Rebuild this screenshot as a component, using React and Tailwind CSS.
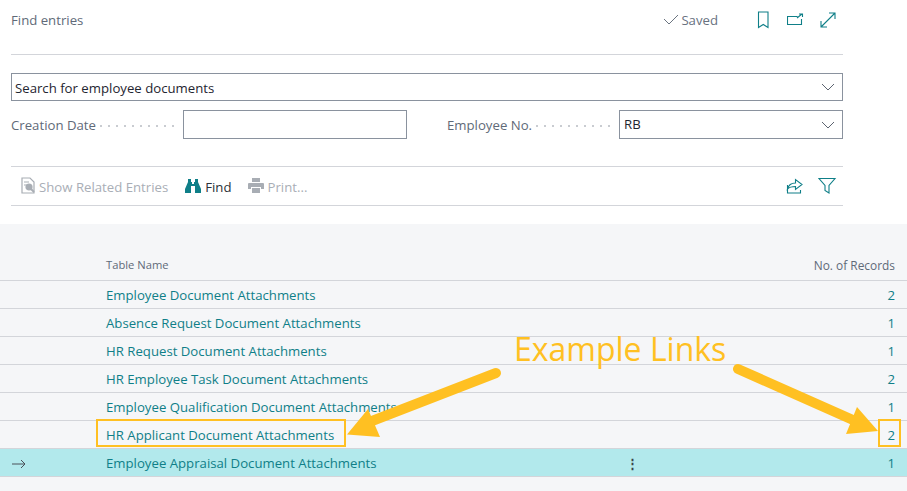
const ROWS = [
  { name: 'Employee Document Attachments', count: 2 },
  { name: 'Absence Request Document Attachments', count: 1 },
  { name: 'HR Request Document Attachments', count: 1 },
  { name: 'HR Employee Task Document Attachments', count: 2 },
  { name: 'Employee Qualification Document Attachments', count: 1 },
  { name: 'HR Applicant Document Attachments', count: 2, marked: true },
  { name: 'Employee Appraisal Document Attachments', count: 1, current: true },
]

function Chevron() {
  return (
    <svg width="14" height="8" viewBox="0 0 14 8" fill="none" stroke="#5c6470" strokeWidth="1">
      <path d="M1 1l6 6 6-6" />
    </svg>
  )
}

function TealIcon({ children, className = '' }) {
  return (
    <svg width="20" height="20" viewBox="0 0 20 20" fill="none" stroke="#0f7f88" strokeWidth="1.1" className={className}>
      {children}
    </svg>
  )
}

function Dots() {
  return <span className="flex-1 ml-[1px] mr-[9px] mt-[3px] h-[2px] bg-[radial-gradient(circle,#c9ccd1_0.8px,transparent_1px)] bg-[length:8px_2px]" />
}

function Field({ label, children }) {
  return (
    <div className="flex items-center">
      <div className="flex items-center w-[172px]">
        <span className="text-[#5f6a78] whitespace-nowrap pt-[2px]">{label}</span>
        <Dots />
      </div>
      {children}
    </div>
  )
}

function Annotations() {
  return (
    <svg className="absolute left-0 top-0 pointer-events-none" width="907" height="491" fill="#ffc022" stroke="none">
      <path d="M496 373L372 421" stroke="#ffc022" strokeWidth="10" strokeLinecap="round" />
      <path d="M347 434.500L368 409L380 437Z" />
      <path d="M738 369L862 424" stroke="#ffc022" strokeWidth="10" strokeLinecap="round" />
      <path d="M878 431L857 407L846 434Z" />
    </svg>
  )
}

export default function App() {
  return (
    <div className="relative w-[907px] h-[491px] overflow-hidden bg-white text-[13.2px] font-['Open_Sans',sans-serif]">
      <div className="h-[224px] pl-[11px] w-[843px]">
        <div className="h-[55px] border-b border-[#d3d5da] flex justify-between">
          <span className="mt-[11px] text-[#5f6a78] leading-[18px]">Find entries</span>
          <div className="flex items-start pt-[10px] pr-[3px]">
            <svg width="17" height="15" viewBox="0 0 17 15" fill="none" stroke="#6b7480" strokeWidth="1" className="mt-[3px]">
              <path d="M1 6l5 5L15 2" />
            </svg>
            <span className="text-[#68727f] leading-[20px] ml-[1px] mr-[36px]">Saved</span>
            <TealIcon className="mr-[13px]"><path d="M4.500 2h9.500v15.500l-4.750-3-4.750 3z" /></TealIcon>
            <TealIcon className="mr-[13px]"><path d="M14.500 9v5.500H.5V6.500h10M10 8l5-4M12 4h3.500v3" /></TealIcon>
            <TealIcon><path d="M1 17L15 3M9 3h6v6M1 11v6h6" /></TealIcon>
          </div>
        </div>

        <div className="mt-[18px] h-[28px] border border-[#8a929e] flex items-center justify-between pl-[3px] pr-[7px]">
          <span className="text-[#1f2530] pt-[3px]">Search for employee documents</span>
          <Chevron />
        </div>

        <div className="mt-[9px] flex justify-between">
          <Field label="Creation Date">
            <div className="w-[224px] h-[29px] border border-[#8a929e]" />
          </Field>
          <Field label="Employee No.">
            <div className="w-[224px] h-[29px] border border-[#8a929e] flex items-center justify-between pl-[4px] pr-[7px]">
              <span className="text-[#1f2530] pt-[1px]">RB</span>
              <Chevron />
            </div>
          </Field>
        </div>

        <div className="mt-[27px] h-[40px] border-y border-[#d3d5da] flex items-center justify-between pl-[10px] pr-[5px]">
          <div className="flex items-center">
            <svg width="14" height="17" viewBox="0 0 14 17" fill="none" stroke="#a8adb4" strokeWidth="1.2" className="mr-[4px]">
              <path d="M1 1h8l4 4v11H1zM3 5h5M3 8h3" />
              <circle cx="8" cy="10" r="3" fill="#a8adb4" />
              <path d="M10 12l3 3" strokeWidth="2" />
            </svg>
            <span className="text-[#a9aeb6] mr-[17px] pt-[3px]">Show Related Entries</span>
            <svg width="16" height="14" viewBox="0 0 16 14" fill="#0f7f88" className="mr-[4px]">
              <path d="M3 0h3v3h1v2h2V3h1V0h3v3l3 7v4H10V7H6v7H0v-4l3-7z" />
            </svg>
            <span className="text-[#2b3138] mr-[16px] pt-[3px]">Find</span>
            <svg width="16" height="15" viewBox="0 0 16 15" fill="#a8adb4" className="mr-[4px]">
              <path d="M4 0h8v4H4zM1 5h14a1 1 0 0 1 1 1v5h-3V9H3v2H0V6a1 1 0 0 1 1-1zM4 10h8v5H4z" />
            </svg>
            <span className="text-[#a9aeb6] pt-[3px]">Print...</span>
          </div>
          <div className="flex items-center gap-[13px]">
            <TealIcon><path d="M2.500 9v8h13v-3M2.500 13c1-4 4-6 8-6V3.500L17 8.500l-6.500 5V10.500c-3 0-6 .5-8 2.500z" /></TealIcon>
            <TealIcon><path d="M1 2.500h16l-6 7v7.500l-4-2.500V9.500z" /></TealIcon>
          </div>
        </div>
      </div>

      <div className="h-[267px] bg-[#f5f6f8] pt-[32px]">
        <div className="h-[25px] border-b border-[#d3d5da] flex justify-between pl-[106px] pr-[12px] text-[#5f6a78] leading-[18px]">
          <span className="text-[11.2px]">Table Name</span>
          <span className="text-[11.9px]">No. of Records</span>
        </div>
        {ROWS.map(function(row) {
          return (
            <div
              key={row.name}
              className={'h-[28px] border-b border-[#d3d5da] flex items-center pr-[12px] pt-[2px] text-[#0f7f88] ' + (row.current ? 'bg-[#b2e9ec]' : '')}
            >
              <span className="w-[106px] pl-[12px] flex items-center shrink-0">
                {row.current && (
                  <svg width="14" height="10" viewBox="0 0 14 10" fill="none" stroke="#4a5058" strokeWidth="1">
                    <path d="M0 5h13M9 1l4 4-4 4" />
                  </svg>
                )}
              </span>
              <span className="flex-1 relative">
                {row.name}
                {row.marked && <span className="absolute left-[-10px] top-[-7px] w-[250px] h-[28px] border-2 border-[#ffc022]" />}
                {row.current && <span className="absolute left-[520px] top-0 text-[#3c434c] font-bold leading-[18px]">⋮</span>}
              </span>
              <span className="relative">
                {row.count}
                {row.marked && <span className="absolute left-[-9px] top-[-7px] w-[23px] h-[28px] border-2 border-[#ffc022]" />}
              </span>
            </div>
          )
        })}
      </div>

      <Annotations />
      <span className="absolute left-[514px] top-[327px] text-[32px] leading-[44px] text-[#ffc022]">Example Links</span>
    </div>
  )
}
